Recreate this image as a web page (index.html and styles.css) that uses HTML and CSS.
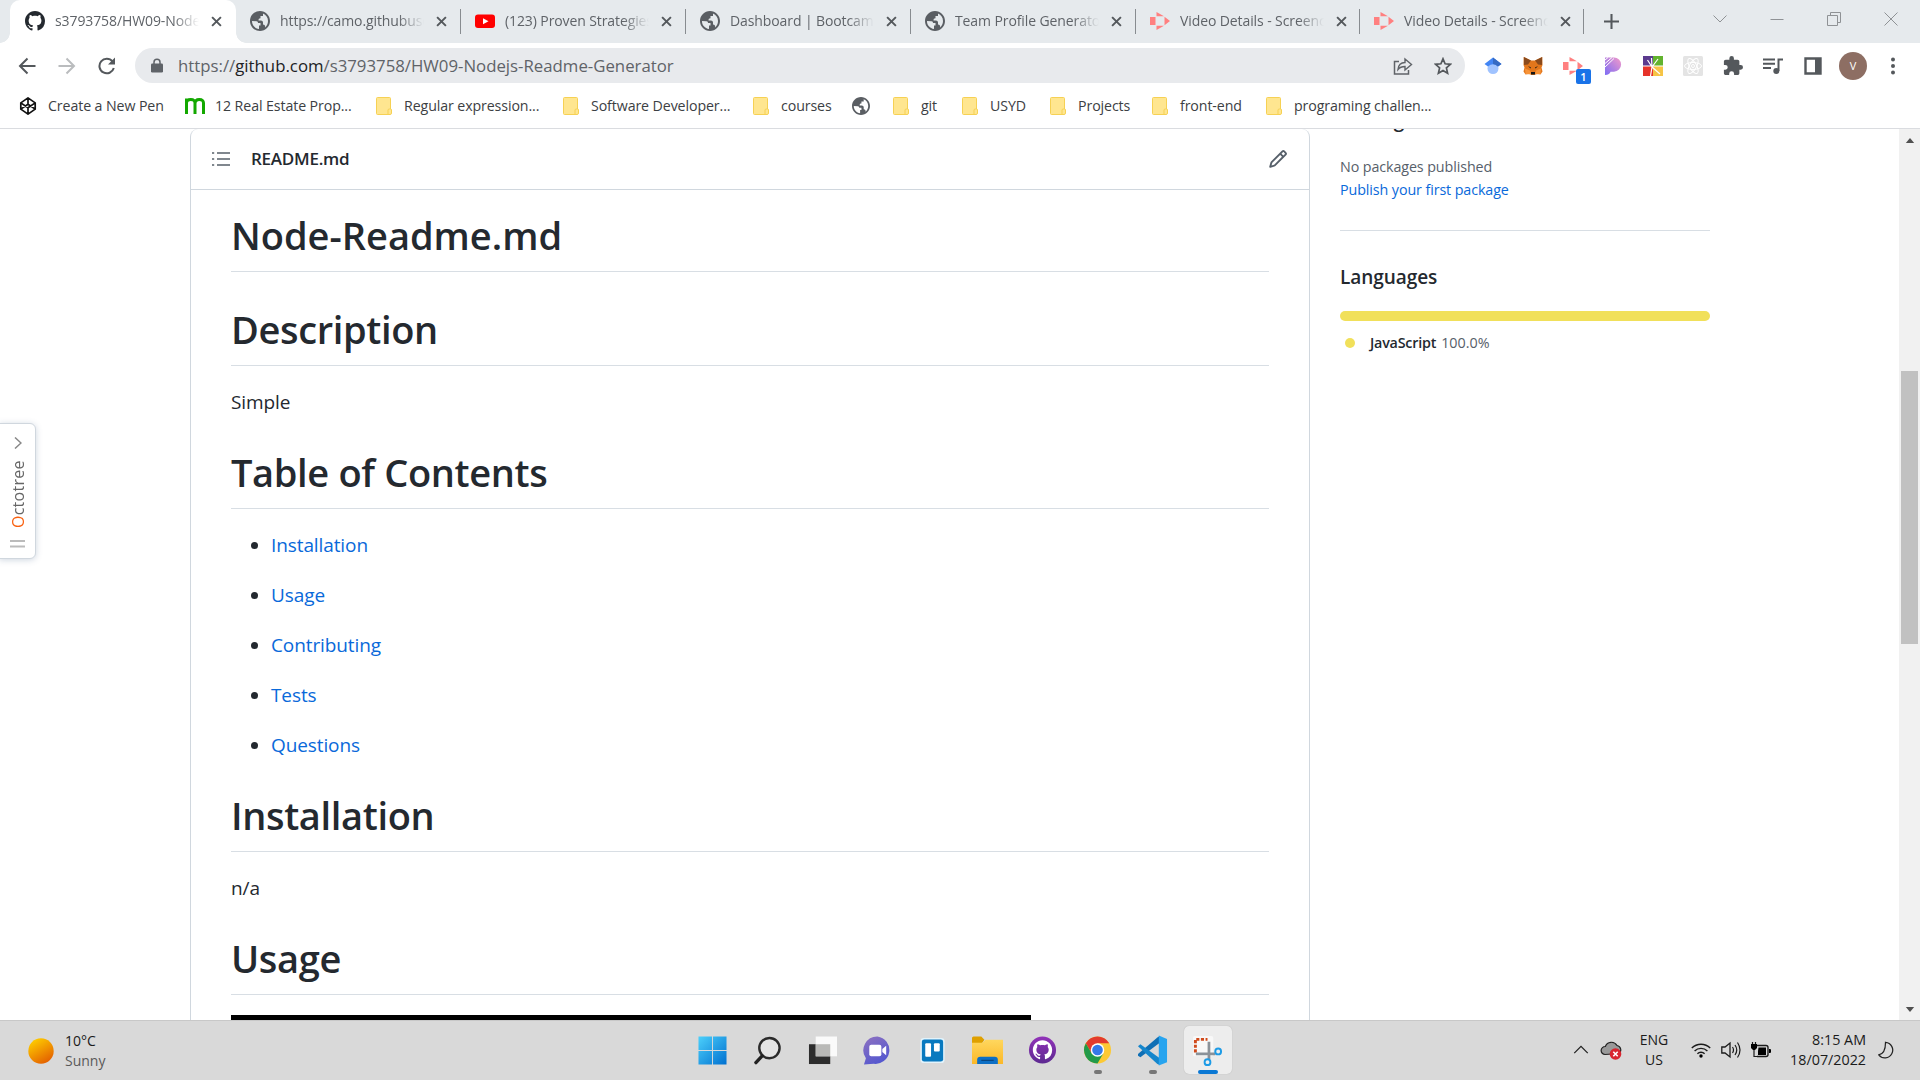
FILE: index.html
```html
<!DOCTYPE html>
<html lang="en">
<head>
<meta charset="utf-8">
<title>s3793758/HW09-Nodejs-Readme-Generator</title>
<link rel="stylesheet" href="styles.css">
</head>
<body>
<svg class="defs" width="0" height="0">
  <defs>
    <linearGradient id="sun" x1="0.2" y1="0" x2="0.8" y2="1"><stop offset="0" stop-color="#ffd000"/><stop offset="1" stop-color="#e25a00"/></linearGradient>
    <linearGradient id="win" x1="0" y1="0" x2="1" y2="1"><stop offset="0" stop-color="#4cd0fb"/><stop offset="1" stop-color="#0070d0"/></linearGradient>
    <linearGradient id="chat" x1="0" y1="0" x2="0.5" y2="1"><stop offset="0" stop-color="#8f72c0"/><stop offset="1" stop-color="#5558cf"/></linearGradient>
    <linearGradient id="pill" x1="1" y1="0" x2="0" y2="1"><stop offset="0" stop-color="#f49ac9"/><stop offset="1" stop-color="#7c6cf5"/></linearGradient>
    <linearGradient id="ghd" x1="0" y1="0" x2="0" y2="1"><stop offset="0" stop-color="#9132b8"/><stop offset="1" stop-color="#5d2a91"/></linearGradient>
    <linearGradient id="fold" x1="0" y1="0" x2="0" y2="1"><stop offset="0" stop-color="#ffd75e"/><stop offset="1" stop-color="#fbb828"/></linearGradient>
  </defs>
  <symbol id="octocat" viewBox="0 0 16 16"><path d="M8 0C3.58 0 0 3.58 0 8c0 3.54 2.29 6.53 5.47 7.59.4.07.55-.17.55-.38 0-.19-.01-.82-.01-1.49-2.01.37-2.53-.49-2.69-.94-.09-.23-.48-.94-.82-1.13-.28-.15-.68-.52-.01-.53.63-.01 1.08.58 1.23.82.72 1.21 1.87.87 2.33.66.07-.52.28-.87.51-1.07-1.78-.2-3.64-.89-3.64-3.95 0-.87.31-1.59.82-2.15-.08-.2-.36-1.02.08-2.12 0 0 .67-.21 2.2.82.64-.18 1.32-.27 2-.27s1.36.09 2 .27c1.53-1.04 2.2-.82 2.2-.82.44 1.1.16 1.92.08 2.12.51.56.82 1.27.82 2.15 0 3.07-1.87 3.75-3.65 3.95.29.25.54.73.54 1.48 0 1.07-.01 1.93-.01 2.2 0 .21.15.46.55.38A8.01 8.01 0 0 0 16 8c0-4.42-3.58-8-8-8z"/></symbol>
  <symbol id="globe" viewBox="2 2 20 20"><path d="M12 2C6.48 2 2 6.48 2 12s4.48 10 10 10 10-4.48 10-10S17.52 2 12 2zm-1 18c-4-.5-7.2-3.900-7-8l4.500.2c1.200 0 1.500 1 1.500 1.800h2.500v2.500H11zm6-1.500c.5-2-.5-3-2-3V13.500c0-1.200-1-2-2-2h-2.500c0-1.500.5-2.200 2-2.200V7h2.500V4.600c3 1.200 5 4.050 5 7.400 0 2.600-1.200 5-3 6.500z"/></symbol>
  <symbol id="folder" viewBox="0 0 16 18"><path d="M1.500.5h12a1 1 0 0 1 1 1v10.500h.5a.8.800 0 0 1 .5.800V16a1.500 1.500 0 0 1-1.500 1.500H1.500a1 1 0 0 1-1-1v-15a1 1 0 0 1 1-1z" fill="#ffe690" stroke="#f6d154"/><path d="M12 17.500v-4.500q0-1 1.500-1h1" fill="none" stroke="#f6d154"/></symbol>
  <symbol id="x" viewBox="0 0 10 10"><path d="M1 1l8 8M9 1L1 9" stroke="#54585c" stroke-width="1.800" fill="none"/></symbol>
  <symbol id="screen" viewBox="0 0 20 18"><path d="M0 5h5.500v8H0zM6.500 0L14 4.200H6.500zM6.500 18L14 13.800H6.500zM14.500 4.800L20 9l-5.500 4.200z" fill="#ff8080"/></symbol>
</svg>

<header class="tabstrip">
  <div class="tab active"><svg class="fav dark"><use href="#octocat"/></svg><span>s3793758/HW09-Nodejs</span><svg class="close"><use href="#x"/></svg></div>
  <div class="tab"><svg class="fav gray"><use href="#globe"/></svg><span>https://camo.githubusercontent</span><svg class="close"><use href="#x"/></svg></div>
  <div class="tab"><svg class="fav" viewBox="0 0 20 20"><rect y="3.500" width="20" height="13.500" rx="3" fill="#f00"/><path d="M8 7.200l5.500 3L8 13.200z" fill="#fff"/></svg><span>(123) Proven Strategies</span><svg class="close"><use href="#x"/></svg></div>
  <div class="tab"><svg class="fav gray"><use href="#globe"/></svg><span>Dashboard | Bootcamp</span><svg class="close"><use href="#x"/></svg></div>
  <div class="tab"><svg class="fav gray"><use href="#globe"/></svg><span>Team Profile Generator</span><svg class="close"><use href="#x"/></svg></div>
  <div class="tab"><svg class="fav"><use href="#screen"/></svg><span>Video Details - Screencastify</span><svg class="close"><use href="#x"/></svg></div>
  <div class="tab"><svg class="fav"><use href="#screen"/></svg><span>Video Details - Screencastify</span><svg class="close"><use href="#x"/></svg></div>
  <svg class="plus" viewBox="0 0 16 16"><path d="M8 0v16M0 8h16" stroke="#54585c" stroke-width="2.200"/></svg>
  <div class="wincontrols">
    <svg viewBox="0 0 14 14"><path d="M.5 3.500L7 10l6.500-6.500" /></svg>
    <svg viewBox="0 0 14 14"><path d="M.5 7.500h13"/></svg>
    <svg viewBox="0 0 14 14"><path d="M.5 3.500h10v10H.5zM3.500 3V.5h10v10H11"/></svg>
    <svg viewBox="0 0 14 14"><path d="M.5.5l13 13M13.500.5l-13 13"/></svg>
  </div>
</header>

<nav class="toolbar">
  <div class="navbtns">
    <svg viewBox="0 0 18 18"><path d="M17.500 9H2M9.500 1.500L2 9l7.500 7.500" stroke="#54585c" stroke-width="2" fill="none"/></svg>
    <svg viewBox="0 0 18 18"><path d="M.5 9H16M8.500 1.500L16 9l-7.500 7.500" stroke="#babcbe" stroke-width="2" fill="none"/></svg>
    <svg viewBox="0 0 18 18"><path d="M14.500 4.500A7.300 7.300 0 1 0 15.800 11" stroke="#54585c" stroke-width="2" fill="none"/><path d="M17 .5v7H10z" fill="#54585c"/></svg>
  </div>
  <div class="omnibox">
    <svg class="lock" viewBox="0 0 12 14"><path d="M3 6V3.800a3 3 0 0 1 6 0V6" fill="none" stroke="#5f6368" stroke-width="1.500"/><rect y="5" width="12" height="9" rx="1.300" fill="#5f6368"/></svg>
    <p class="url">https://<b>github.com</b>/s3793758/HW09-Nodejs-Readme-Generator</p>
    <svg class="share" viewBox="0 0 20 18"><path d="M6 4.500H1.500v12.500h14V13" fill="none" stroke="#5f6368" stroke-width="1.500"/><path d="M5 12.500c.5-5 3-7 7-7V2l6.500 5.500L12 13V9.500c-3 0-5 .5-7 3z" fill="none" stroke="#5f6368" stroke-width="1.400"/></svg>
    <svg class="star" viewBox="0 0 18 18"><path d="M9 1.800l2.100 5 5.400.5-4.100 3.600 1.200 5.300L9 13.400l-4.600 2.800 1.200-5.300L1.500 7.300l5.400-.5z" fill="none" stroke="#54585c" stroke-width="1.700"/></svg>
  </div>
  <div class="exts">
    <svg viewBox="0 0 20 20"><circle cx="10" cy="12.500" r="5.500" fill="#a0c3ff"/><path d="M10 1.500L1.500 8l3.500 2.600q5-4.600 10 0L18.500 8z" fill="#4285f4"/><path d="M10 1.500L18.500 8 15 10.600Q12.500 8 10 8z" fill="#356ac3"/></svg>
    <svg viewBox="0 0 20 20"><path d="M.8 1L8 4.500h4L19.200 1l.3 8-1 2.500 1 4-2 3-4-.8L11.500 19h-3l-2-1.300-4 .8-2-3 1-4-1-2.500z" fill="#e2761b"/><path d="M.8 1L8 4.500 5 8.500 1 9zM19.200 1L12 4.500l3 4 4 .5z" fill="#8a4a1c"/><path d="M2 12.500l5 2 1.500 4-6-.5zM18 12.500l-5 2-1.500 4 6-.5z" fill="#f79338"/><path d="M5 10l3 1.500-.5 1zM15 10l-3 1.500.5 1zM8 16h4v2.500H8z" fill="#161616"/></svg>
    <div class="badged"><svg viewBox="0 0 20 18"><use href="#screen"/></svg><i>1</i></div>
    <svg viewBox="0 0 20 20"><path d="M2 1.500h9a6.800 6.800 0 0 1 0 14.200H7.500q-.5 3-5.500 3.300z" fill="url(#pill)"/><path d="M2 7.500l7-6M2 11l9-8.500M2 4l3-2.500" stroke="#fff" stroke-width="1"/></svg>
    <svg viewBox="0 0 20 20"><path d="M0 0h10v10H0z" fill="#5b3a8e"/><path d="M10 0h10v10H10z" fill="#62b32e"/><path d="M0 10h10v10H0z" fill="#e6332a"/><path d="M10 10h10v10H10z" fill="#f6c445"/><path d="M9 11l-.5-9M9 11L4.500 4M9 11l6-8M0 10h20M9 11l8 7M9 11l-1.500 9" stroke="#fff" stroke-width="1.200"/></svg>
    <svg viewBox="0 0 20 20"><rect width="20" height="20" rx="1.500" fill="#e4e4e4"/><g fill="none" stroke="#fff" stroke-width="1"><ellipse cx="10" cy="10" rx="8.500" ry="3.500"/><ellipse cx="10" cy="10" rx="8.500" ry="3.500" transform="rotate(60 10 10)"/><ellipse cx="10" cy="10" rx="8.500" ry="3.500" transform="rotate(120 10 10)"/><circle cx="10" cy="10" r="1.500"/></g></svg>
    <svg viewBox="1 1 22 22"><path d="M20.500 11H19V7c0-1.100-.9-2-2-2h-4V3.500a2.500 2.500 0 0 0-5 0V5H4c-1.100 0-2 .9-2 2v3.800h1.500a2.700 2.700 0 0 1 0 5.400H2V20c0 1.100.9 2 2 2h3.800v-1.500a2.700 2.700 0 0 1 5.400 0V22H17c1.100 0 2-.9 2-2v-4h1.500a2.500 2.500 0 0 0 0-5z" fill="#54585c"/></svg>
    <svg viewBox="0 0 20 20"><path d="M0 3.500h12M0 7.800h12M0 12h8M15.500 15V3.500H20" fill="none" stroke="#54585c" stroke-width="2"/><circle cx="13.300" cy="15" r="3" fill="#54585c"/></svg>
    <svg viewBox="0 0 20 20"><path d="M2.500 2.500h15v15h-15z" fill="#fff" stroke="#54585c" stroke-width="2.400"/><path d="M12 2h6v16h-6z" fill="#54585c"/></svg>
    <span class="avatar">V</span>
    <svg viewBox="0 0 20 20"><g fill="#54585c"><circle cx="10" cy="3.500" r="2"/><circle cx="10" cy="10" r="2"/><circle cx="10" cy="16.500" r="2"/></g></svg>
  </div>
</nav>

<nav class="bookmarks">
  <a><svg viewBox="0 0 20 20"><path d="M10 1l8 5.500v7L10 19l-8-5.500v-7zM2 6.500l8 5.500 8-5.500M2 13.500L10 8l8 5.500M10 1v7M10 12v7" fill="none" stroke="#111" stroke-width="1.900" stroke-linejoin="round"/></svg>Create a New Pen</a>
  <a class="m"><svg viewBox="0 0 20 18"><path d="M1.500 17V1.500M1.500 6Q1.500 2.500 5.800 2.500T10 6.500V17M10 6.500Q10 2.500 14.300 2.500T18.500 6.500V17" fill="none" stroke="#13a800" stroke-width="3"/></svg>12 Real Estate Prop...</a>
  <a><svg><use href="#folder"/></svg>Regular expression...</a>
  <a><svg><use href="#folder"/></svg>Software Developer...</a>
  <a><svg><use href="#folder"/></svg>courses</a>
  <a><svg class="gray"><use href="#globe"/></svg></a>
  <a><svg><use href="#folder"/></svg>git</a>
  <a><svg><use href="#folder"/></svg>USYD</a>
  <a><svg><use href="#folder"/></svg>Projects</a>
  <a><svg><use href="#folder"/></svg>front-end</a>
  <a><svg><use href="#folder"/></svg>programing challen...</a>
</nav>

<main class="page">
  <article class="readme">
    <div class="readme-head">
      <svg class="list" viewBox="0 0 18 16"><path d="M5 2h13M5 8h13M5 14h13M0 2h2.200M0 8h2.200M0 14h2.200" stroke="#57606a" stroke-width="1.500"/></svg>
      <h3>README.md</h3>
      <svg class="pencil" viewBox="0 0 16 16"><path fill="#57606a" d="M11.013 1.427a1.750 1.750 0 0 1 2.474 0l1.086 1.086a1.750 1.750 0 0 1 0 2.474l-8.610 8.610c-.21.21-.47.364-.756.445l-3.251.930a.75.75 0 0 1-.927-.928l.929-3.250c.081-.286.235-.547.445-.758l8.610-8.610zm1.414 1.060a.25.25 0 0 0-.354 0L10.811 3.750l1.439 1.440 1.263-1.263a.25.25 0 0 0 0-.354l-1.086-1.086zM11.189 6.250L9.750 4.810l-6.286 6.287a.25.25 0 0 0-.064.108l-.558 1.953 1.953-.558a.249.249 0 0 0 .108-.064l6.286-6.286z"/></svg>
    </div>
    <div class="markdown">
      <h1>Node-Readme.md</h1>
      <h1>Description</h1>
      <p>Simple</p>
      <h1>Table of Contents</h1>
      <ul>
        <li><a>Installation</a></li>
        <li><a>Usage</a></li>
        <li><a>Contributing</a></li>
        <li><a>Tests</a></li>
        <li><a>Questions</a></li>
      </ul>
      <h1>Installation</h1>
      <p>n/a</p>
      <h1>Usage</h1>
      <div class="video"></div>
    </div>
  </article>
  <aside class="sidebar">
    <h2 class="packages">Packages</h2>
    <p>No packages published</p>
    <p><a>Publish your first package</a></p>
    <hr>
    <h2>Languages</h2>
    <div class="langbar"></div>
    <div class="lang"><i></i><b>JavaScript</b>100.0%</div>
  </aside>
  <div class="scrollbar">
    <svg viewBox="0 0 10 6"><path d="M0 6l5-6 5 6z" fill="#505050"/></svg>
    <div class="thumb"></div>
    <svg viewBox="0 0 10 6"><path d="M0 0l5 6 5-6z" fill="#505050"/></svg>
  </div>
  <div class="octotree">
    <svg viewBox="0 0 8 12"><path d="M1 .5L7 6l-6 5.500" fill="none" stroke="#888" stroke-width="1.500"/></svg>
    <span><b>O</b>ctotree</span>
    <svg class="grip" viewBox="0 0 15 8"><path d="M0 1h15M0 6.500h15" stroke="#bbb" stroke-width="1.800"/></svg>
  </div>
</main>

<footer class="taskbar">
  <div class="weather">
    <svg viewBox="0 0 26 26"><circle cx="13" cy="13" r="12.700" fill="url(#sun)"/></svg>
    <p>10°C<br><span>Sunny</span></p>
  </div>
  <div class="apps">
    <div><svg viewBox="0 0 30 30"><path d="M.5.5h14v14H.5zM15.500.5h14v14h-14zM.5 15.500h14v14H.5zM15.500 15.500h14v14h-14z" fill="url(#win)"/></svg></div>
    <div><svg viewBox="0 0 30 30"><circle cx="17" cy="12.500" r="10.500" fill="#e4e4e4" stroke="#2b2b2b" stroke-width="2.500"/><path d="M9.500 20.500L3 27.500" stroke="#222" stroke-width="3.500" stroke-linecap="round"/></svg></div>
    <div><svg viewBox="0 0 30 30"><path d="M1 8.500h22V29H1z" fill="#2d2d2d"/><path d="M8 .5h22V21H8z" fill="#fafafa"/><path d="M8 8.500h15V21H8z" fill="#b9b9b7"/></svg></div>
    <div><svg viewBox="0 0 30 30"><path d="M15 .5a14 14 0 1 1-4 28.200L1 29.500l2-6.500A14.300 14.300 0 0 1 15 .5z" fill="url(#chat)"/><rect x="6.500" y="9" width="12.500" height="12" rx="2" fill="#fff"/><path d="M20 13.500L24 10v10l-4-3.500z" fill="#fff"/></svg></div>
    <div><svg viewBox="0 0 30 30"><rect x="2.500" y="2" width="25" height="26" rx="3.500" fill="#e2f3fb"/><rect x="4" y="3.500" width="22" height="23" rx="2.500" fill="#0879bf"/><rect x="7.500" y="7.500" width="6" height="14" rx="1" fill="#fff"/><rect x="16.500" y="7.500" width="6" height="8.500" rx="1" fill="#fff"/></svg></div>
    <div><svg class="big" viewBox="0 0 30 30"><path d="M0 3a1.500 1.500 0 0 1 1.500-1.500H9L12 4.500 9 9H0z" fill="#dfa000"/><path d="M0 7.500h10l3-3h17V28H0z" fill="url(#fold)"/><path d="M5 28v-4a3 3 0 0 1 3-3h14a3 3 0 0 1 3 3v4z" fill="#0d6fc5"/><path d="M9 24.500h12" stroke="#083f75" stroke-width="1"/></svg></div>
    <div><svg viewBox="0 0 30 30"><circle cx="15" cy="14.500" r="14" fill="url(#ghd)"/><g transform="translate(5 4.500) scale(1.250)"><path fill="#fff" d="M8 0C3.58 0 0 3.58 0 8c0 3.54 2.29 6.53 5.47 7.59.4.07.55-.17.55-.38 0-.19-.01-.82-.01-1.49-2.01.37-2.53-.49-2.69-.94-.09-.23-.48-.94-.82-1.13-.28-.15-.68-.52-.01-.53.63-.01 1.08.58 1.23.82.72 1.21 1.87.87 2.33.66.07-.52.28-.87.51-1.07-1.78-.2-3.64-.89-3.64-3.95 0-.87.31-1.59.82-2.15-.08-.2-.36-1.02.08-2.12 0 0 .67-.21 2.2.82.64-.18 1.32-.27 2-.27s1.36.09 2 .27c1.53-1.04 2.2-.82 2.2-.82.44 1.1.16 1.92.08 2.12.51.56.82 1.27.82 2.15 0 3.07-1.87 3.75-3.65 3.95.29.25.54.73.54 1.48 0 1.07-.01 1.93-.01 2.2 0 .21.15.46.55.38A8.01 8.01 0 0 0 16 8c0-4.42-3.58-8-8-8z"/></g></svg></div>
    <div><svg viewBox="0 0 30 30"><circle cx="15" cy="14.500" r="14" fill="#fcc934"/><path d="M15 7.500h12.100A14 14 0 0 0 2.900 7.500L9 18z" fill="#e33b2e"/><path d="M2.900 7.500A14 14 0 0 0 15 28.500L21 18 9 18z" fill="#229a4a"/><circle cx="15" cy="14.500" r="7" fill="#fff"/><circle cx="15" cy="14.500" r="5.500" fill="#3579e8"/></svg><i></i></div>
    <div><svg class="big" viewBox="0 0 32 32"><path d="M23.500 8v-7L21 2.500 1 19.500v2L3.500 23z" fill="#0f6fb5"/><path d="M1 11.500L3.500 9.500 23.500 24v7L21 30z" fill="#1586cc"/><path d="M22.500.5L31 4v24l-8.500 3.500z" fill="#27a4ef"/></svg><i></i></div>
    <div class="current"><svg class="big" viewBox="0 0 32 32"><rect x="1" y="1" width="21" height="21" rx="2" fill="#f8f8f8"/><path d="M3.500 18V4.500H16" fill="none" stroke="#d04a1b" stroke-width="3" stroke-dasharray="3.200 1.600"/><path d="M17.500 7v18M4 19.500h20" stroke="#8b9299" stroke-width="2.800"/><circle cx="27" cy="17" r="3" fill="none" stroke="#1d9be6" stroke-width="2"/><circle cx="16" cy="28" r="3" fill="none" stroke="#1d9be6" stroke-width="2"/></svg><i></i></div>
  </div>
  <div class="tray">
    <svg class="up" viewBox="0 0 16 10"><path d="M.5 9L8 1.500 15.500 9" fill="none" stroke="#222" stroke-width="1.400"/></svg>
    <svg class="cloud" viewBox="0 0 22 20"><path d="M5 14.500a4 4 0 0 1 .3-8A6.500 6.500 0 0 1 17 5.500a4.500 4.500 0 0 1 2 8z" fill="#999" stroke="#222" stroke-width="1.200"/><circle cx="15.500" cy="14" r="5.800" fill="#d9252f"/><path d="M13.300 11.800l4.400 4.400M17.700 11.800l-4.400 4.400" stroke="#fff" stroke-width="1.600"/></svg>
    <p class="lang-id">ENG<br>US</p>
    <svg class="wifi" viewBox="0 0 20 16"><path d="M.8 6a13 13 0 0 1 18.400 0M3.600 9a9 9 0 0 1 12.800 0M6.400 11.800a5 5 0 0 1 7.200 0" fill="none" stroke="#1b1b1b" stroke-width="1.400"/><circle cx="10" cy="14" r="1.700"/></svg>
    <svg class="sound" viewBox="0 0 20 18"><path d="M.8 6v6H4l5 4V2L4 6z" fill="none" stroke="#1b1b1b" stroke-width="1.300"/><path d="M11.500 6q2 3 0 6M14 4q3.500 5 0 10M16.500 1.500q5 7.500 0 15" fill="none" stroke="#1b1b1b" stroke-width="1.200"/></svg>
    <svg class="battery" viewBox="0 0 20 16"><path d="M6 3.500h9a2 2 0 0 1 2 2v7a2 2 0 0 1-2 2H6" fill="none" stroke="#1b1b1b" stroke-width="1.400"/><path d="M7.500 5.500h7.500v7.500h-8V9zM18 7h1a1 1 0 0 1 1 1v2a1 1 0 0 1-1 1h-1zM0 2h6v4L4 8H2L0 6z"/><path d="M1.500 0v2M4.500 0v2M3 8v6.500h4" fill="none" stroke="#1b1b1b" stroke-width="1.200"/></svg>
    <p class="clock">8:15 AM<br>18/07/2022</p>
    <svg class="moon" viewBox="0 0 17 18"><path d="M8 .8a8.300 8.300 0 1 1-7.200 13.400Q8 13 8 .8z" fill="none" stroke="#222" stroke-width="1.300"/></svg>
  </div>
</footer>
</body>
</html>
```
FILE: styles.css
```css
* { box-sizing: border-box; }
body {
  margin: 0;
  width: 1920px;
  height: 1080px;
  overflow: hidden;
  display: flex;
  flex-direction: column;
  background: #fff;
  color: #24292f;
  font-family: "Open Sans", "Noto Sans", sans-serif;
}
p, h1, h2, h3, ul { margin: 0; padding: 0; }
svg { display: block; flex: none; }
i { font-style: normal; }
.defs { position: absolute; }
.gray { fill: #5a5e63; }
.dark { fill: #24292f; }

/* tabs */
.tabstrip {
  flex: none;
  height: 43px;
  padding-left: 10px;
  display: flex;
  background: #e6eaed;
}
.tab {
  width: 225px;
  height: 42px;
  padding-left: 14px;
  display: flex;
  align-items: center;
  font-size: 14px;
  letter-spacing: -0.1px;
  color: #5f6368;
  flex: none;
  background: linear-gradient(#888c90, #888c90) right 9px / 1px 25px no-repeat;
}
.tab:nth-child(n+6) { width: 224px; }
.tab.active {
  position: relative;
  height: 43px;
  width: 226px;
  padding: 0 0 1px 15px;
  background: #fff;
  border-radius: 10px 10px 0 0;
}
/* outward curves at the foot of the active tab */
.tab.active::before,
.tab.active::after {
  content: "";
  position: absolute;
  bottom: 0;
  width: 10px;
  height: 10px;
}
.tab.active::before { left: -10px; background: radial-gradient(circle at 0 0, transparent 9.500px, #fff 10px); }
.tab.active::after { right: -10px; background: radial-gradient(circle at 100% 0, transparent 9.500px, #fff 10px); }
.tab:nth-child(2) { padding-left: 14px; }
.fav { width: 20px; height: 20px; margin-right: 10px; }
.tab span {
  width: 144px;
  padding-bottom: 1px;
  white-space: nowrap;
  overflow: hidden;
  -webkit-mask-image: linear-gradient(to right, #000 82%, transparent 100%);
  mask-image: linear-gradient(to right, #000 82%, transparent 100%);
}
.close { width: 11px; height: 11px; margin-left: 12px; }
.plus { width: 15px; height: 15px; margin: 14px 0 0 20px; }
.wincontrols { display: flex; gap: 43px; margin: 12px 0 0 auto; padding-right: 22px; }
.wincontrols svg { width: 14px; height: 14px; fill: none; stroke: #8f9295; }

/* toolbar */
.toolbar { flex: none; height: 45px; display: flex; align-items: center; }
.navbtns { display: flex; gap: 22px; width: 135px; padding-left: 18px; }
.navbtns svg { width: 18px; height: 18px; }
.omnibox {
  width: 1330px;
  height: 35px;
  border-radius: 18px;
  background: #e8eaed;
  display: flex;
  align-items: center;
  padding: 0 13px 0 16px;
}
.lock { width: 12px; height: 15px; }
.url { flex: 1; padding-left: 15px; font-size: 16.800px; line-height: 33px; color: #5f6368; letter-spacing: 0; }
.url b { font-weight: 400; color: #202124; }
.share { width: 20px; height: 18px; margin-right: 21px; }
.star { width: 18px; height: 18px; }
.exts { display: flex; align-items: center; gap: 20px; padding-left: 18px; }
.exts svg { width: 20px; height: 20px; }
.badged { position: relative; width: 20px; }
.badged svg { height: 18px; }
.badged i {
  position: absolute;
  left: 13px;
  top: 12px;
  width: 15px;
  height: 15px;
  border-radius: 2px;
  background: #1a73e8;
  color: #fff;
  font-size: 11px;
  font-weight: 600;
  line-height: 15px;
  text-align: center;
}
.avatar {
  width: 28px;
  height: 28px;
  margin: 0 -4px;
  border-radius: 50%;
  background: #8d6e63;
  color: #fff;
  font-size: 11px;
  line-height: 28px;
  text-align: center;
}

/* bookmarks */
.bookmarks {
  flex: none;
  height: 41px;
  padding: 0 0 5px 18px;
  display: grid;
  grid-template-columns: 167px 189px 187px 190px 100px 40px 69px 88px 102px 114px 200px;
  align-items: center;
  border-bottom: 1px solid #dadce0;
  font-size: 14.200px;
  color: #3c4043;
  letter-spacing: -0.1px;
}
.bookmarks a { display: flex; align-items: center; gap: 10px; white-space: nowrap; }
.bookmarks svg { width: 20px; height: 18px; }

/* page */
.page { flex: none; height: 891px; position: relative; display: flex; overflow: hidden; }
.readme {
  width: 1120px;
  margin-left: 190px;
  border: 1px solid #d0d7de;
  border-width: 0 1px;
  border-radius: 8px 8px 0 0;
  flex: none;
}
.readme-head { height: 61px; display: flex; align-items: center; padding: 0 21px; border-bottom: 1px solid #d0d7de; }
.list { width: 18px; height: 16px; }
.readme-head h3 { flex: 1; margin-left: 21px; padding-bottom: 2px; font-size: 17px; font-weight: 600; letter-spacing: -0.25px; }
.pencil { width: 20px; height: 20px; margin-bottom: 1px; }
.markdown { padding: 19px 40px 0; font-size: 19px; line-height: 32px; letter-spacing: -0.1px; }
.markdown p, .markdown li { height: 30px; }
.markdown h1 {
  height: 63px;
  margin: 30px 0 20px;
  border-bottom: 1px solid #d8dee4;
  font-size: 38px;
  line-height: 52px;
  font-weight: 600;
  letter-spacing: -0.35px;
}
.markdown h1:first-child { margin: 0 0 31px; letter-spacing: 0; }
.markdown ul { padding-left: 40px; }
.markdown li + li { margin-top: 20px; }
.markdown a, .sidebar a { color: #0969da; }
.video { width: 800px; height: 450px; background: #000; }

.sidebar { width: 370px; margin-left: 30px; font-size: 14.300px; line-height: 23px; color: #57606a; }
.sidebar p { letter-spacing: -0.1px; }
.sidebar h2 { font-size: 19px; line-height: 30px; font-weight: 600; color: #24292f; letter-spacing: -0.05px; }
.sidebar .packages { margin: -24px 0 20px; }
.sidebar hr { height: 1px; border: 0; margin: 29px 0 31px; background: #d8dee4; }
.langbar { height: 10px; margin: 19px 0 10px; border-radius: 6px; background: #f1e05a; }
.lang { display: flex; align-items: center; }
.lang i { width: 10px; height: 10px; margin: 0 15px 0 5px; border-radius: 50%; background: #f1e05a; }
.lang b { margin-right: 5px; font-weight: 600; color: #24292f; letter-spacing: -0.2px; }

.scrollbar {
  width: 21px;
  margin-left: auto;
  background: #f1f1f1;
  display: flex;
  flex-direction: column;
  align-items: center;
  padding: 9px 0 8px;
}
.scrollbar svg { width: 10px; height: 5px; }
.thumb { width: 17px; height: 273px; margin: 228px 0 auto; background: #c1c1c1; }

.octotree {
  position: absolute;
  left: -1px;
  top: 294px;
  width: 37px;
  height: 136px;
  border: 1px solid #d0d7de;
  border-radius: 0 6px 6px 0;
  box-shadow: 0 1px 6px rgba(60, 90, 130, 0.25);
  background: #fff;
  display: flex;
  flex-direction: column;
  align-items: center;
  padding-top: 13px;
}
.octotree svg { width: 8px; height: 12px; }
.octotree span { height: 68px; margin: 11px 0 12px; writing-mode: vertical-rl; transform: rotate(180deg); font-size: 16px; line-height: 20px; letter-spacing: 0.25px; color: #666; }
.octotree b { font-weight: 400; color: #f9600f; }
.octotree .grip { width: 15px; height: 8px; }

/* taskbar */
.taskbar {
  flex: none;
  height: 60px;
  display: grid;
  grid-template-columns: 685px 1fr 349px;
  background: #d9d9d9;
  border-top: 1px solid #c8c8c8;
  font-size: 14px;
  line-height: 20px;
  color: #1b1b1b;
}
.weather { display: flex; align-items: center; padding-left: 28px; gap: 11px; }
.weather svg { width: 26px; height: 26px; }
.weather span { color: #5a5a5a; }
.apps { display: flex; gap: 7.100px; padding-top: 5px; padding-left: 3px; }
.apps > div { position: relative; width: 48px; height: 48px; display: grid; place-items: center; border-radius: 5px; }
.apps svg { width: 29px; height: 29px; }
.apps .big { width: 31px; height: 31px; }
.apps i { position: absolute; left: 20px; bottom: 0; width: 8px; height: 4px; border-radius: 2px; background: #777; }
.apps .current { background: #ededed; box-shadow: 0 0 1px #aaa; }
.apps .current i { left: 14px; width: 20px; background: #0a78d4; }
.tray { display: flex; align-items: center; padding: 0 0 2px 2px; }
.up { width: 16px; height: 9px; }
.cloud { width: 22px; height: 20px; margin-left: 11px; }
.lang-id { width: 50px; margin-left: 7px; text-align: center; }
.wifi { width: 20px; height: 16px; margin-left: 12px; }
.sound { width: 20px; height: 18px; margin-left: 10px; }
.battery { width: 20px; height: 16px; margin-left: 10px; }
.clock { width: 95px; text-align: right; font-size: 14.300px; }
.moon { width: 16px; height: 18px; margin-left: 12px; }
```
